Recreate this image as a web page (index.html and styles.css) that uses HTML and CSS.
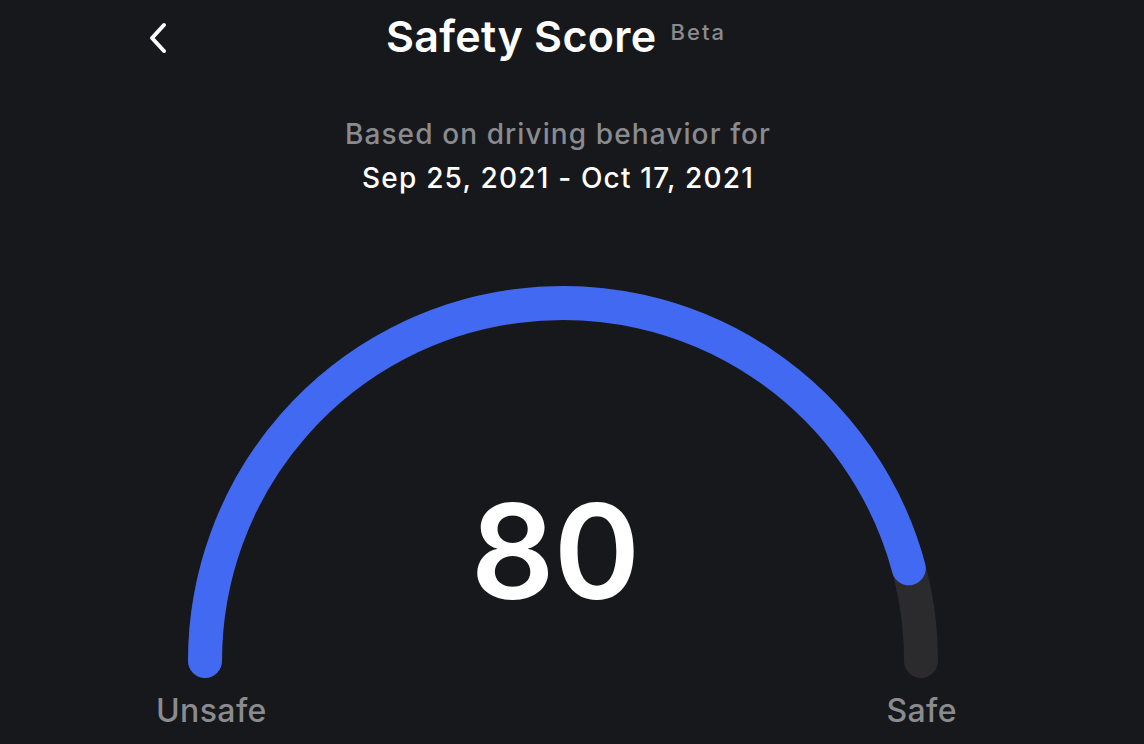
FILE: index.html
```html
<!DOCTYPE html>
<html lang="en">
<head>
<meta charset="utf-8">
<title>Safety Score</title>
<link rel="stylesheet" href="styles.css">
</head>
<body>
<main class="screen">
  <header class="topbar">
    <button class="back" aria-label="Back">
      <svg width="22" height="34" viewBox="0 0 22 34" fill="none">
        <path d="M16 4 L4 17 L16 30" stroke="#ffffff" stroke-width="4" stroke-linecap="round" stroke-linejoin="round"/>
      </svg>
    </button>
    <h1 class="title">Safety Score <sup class="beta">Beta</sup></h1>
  </header>

  <section class="period">
    <p class="period-label">Based on driving behavior for</p>
    <p class="period-range">Sep 25, 2021 - Oct 17, 2021</p>
  </section>

  <section class="gauge">
    <div class="dial">
      <svg class="arc" width="760" height="400" viewBox="0 0 760 400" fill="none">
        <path d="M22 380 A358 358 0 0 1 738 380" stroke="#2b2b2d" stroke-width="34" stroke-linecap="round"/>
        <path d="M22 380 A358 358 0 0 1 725.8 287.3" stroke="#4169f2" stroke-width="34" stroke-linecap="round"/>
      </svg>
      <div class="score">80</div>
    </div>
    <div class="scale">
      <span class="scale-label">Unsafe</span>
      <span class="scale-label">Safe</span>
    </div>
  </section>
</main>
</body>
</html>
```

FILE: styles.css
```css
* {
  box-sizing: border-box;
}

html,
body {
  margin: 0;
  padding: 0;
  background: #17181b;
}

body {
  font-family: Inter, "Noto Sans", "Liberation Sans", sans-serif;
  color: #ffffff;
  width: 1144px;
  height: 744px;
  overflow: hidden;
}

.screen {
  display: flex;
  flex-direction: column;
  align-items: center;
  width: 1144px;
  padding-right: 28px;
}

.topbar {
  position: relative;
  width: 100%;
  display: flex;
  justify-content: center;
  padding-top: 14px;
}

.back {
  position: absolute;
  left: 148px;
  top: 21px;
  padding: 0;
  border: 0;
  background: none;
  display: flex;
}

.title {
  margin: 0 0 0 -4px;
  font-size: 43px;
  line-height: 45px;
  font-weight: 600;
  letter-spacing: 0.3px;
}

.beta {
  font-size: 22px;
  font-weight: 500;
  letter-spacing: 2px;
  color: #8b8b8f;
  vertical-align: top;
  position: relative;
  top: -4px;
  margin-left: 3px;
}

.period {
  margin-top: 53px;
  text-align: center;
}

.period-label,
.period-range {
  margin: 0;
  font-size: 28px;
  line-height: 44px;
  letter-spacing: 1.1px;
}

.period-label {
  color: #8a8b8f;
  font-weight: 500;
}

.period-range {
  color: #ffffff;
  font-weight: 500;
  letter-spacing: 1.2px;
}

.gauge {
  margin-top: 81px;
  width: 820px;
  display: flex;
  flex-direction: column;
  margin-left: 10px;
}

.dial {
  position: relative;
  align-self: center;
  width: 760px;
  height: 400px;
}

.arc {
  display: block;
}

.score {
  position: absolute;
  left: 0;
  right: 0;
  top: 206px;
  text-align: center;
  padding-right: 16px;
  font-size: 131px;
  line-height: 130px;
  font-weight: 600;
  letter-spacing: -1px;
}

.scale {
  display: flex;
  justify-content: space-between;
  padding: 10px 16px 0 3px;
}

.scale-label {
  font-size: 32px;
  line-height: 40px;
  font-weight: 500;
  letter-spacing: 0.4px;
  color: #8a8b8f;
}
```
